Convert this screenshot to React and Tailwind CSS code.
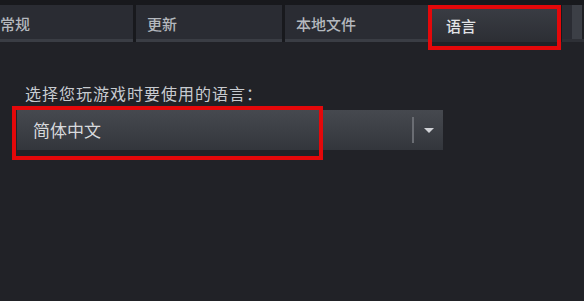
import React from "react";

const tabs = [
  { label: "常规", w: "w-[133px]", pl: "pl-0" },
  { label: "更新", w: "w-[146px]", pl: "pl-[11px]" },
  { label: "本地文件", w: "w-[143px]", pl: "pl-[11px]" },
];

const App = () => {
  return (
    <div
      className="relative w-[584px] h-[301px] overflow-hidden bg-[#212227] text-[#c3c6cb]"
      style={{ fontFamily: '"Noto Sans CJK SC", "Noto Sans", sans-serif' }}
    >
      {/* tab strip */}
      <div className="flex items-stretch h-[42px] bg-[#18191d] pt-[5px] gap-[3px]">
        {tabs.map((t) => (
          <div
            key={t.label}
            className={`${t.w} ${t.pl} flex items-center pt-[5px] shrink-0 bg-[#2a2c33] border-b-[3px] border-[#3a3d44] text-[15px] font-medium text-[#b4b8be]`}
          >
            {t.label}
          </div>
        ))}
        <div className="w-[128px] shrink-0 flex items-center pt-[5px] pl-[15px] bg-gradient-to-b from-[#3b3e45] to-[#2c2e34] text-[15px] font-medium text-[#e2e4e7]">
          语言
        </div>
        <div className="flex-1 flex border-b-[3px] border-[#2e3036]">
          <div className="w-[10px] bg-[#2a2c33]" />
          <div className="w-[10px] bg-[#3c3f46]" />
          <div className="flex-1 bg-[#1e1f23]" />
        </div>
      </div>

      {/* body */}
      <div className="flex flex-col pl-[17px] pt-[41px]">
        <div className="pl-[8px] text-[16px] leading-[20px] tracking-[1px] text-[#c8cbd0]">
          选择您玩游戏时要使用的语言：
        </div>
        <div className="mt-[7px] w-[426px] h-[40px] flex items-center bg-gradient-to-b from-[#46494f] to-[#33363c]">
          <div className="flex-1 pl-[16px] text-[17px] text-[#d8dadd]">简体中文</div>
          <div className="w-[2px] h-[26px] bg-[#6a6d73]" />
          <div className="w-[29px] flex items-center justify-center">
            <div className="w-0 h-0 border-l-[5px] border-r-[5px] border-t-[5px] border-l-transparent border-r-transparent border-t-[#d0d2d6]" />
          </div>
        </div>
      </div>

      {/* red highlight boxes */}
      <div className="absolute left-[428px] top-[5px] w-[133px] h-[45px] border-[4px] border-[#e4080a]" />
      <div className="absolute left-[12px] top-[106px] w-[311px] h-[54px] border-[4px] border-[#e4080a]" />
    </div>
  );
};

export default App;
